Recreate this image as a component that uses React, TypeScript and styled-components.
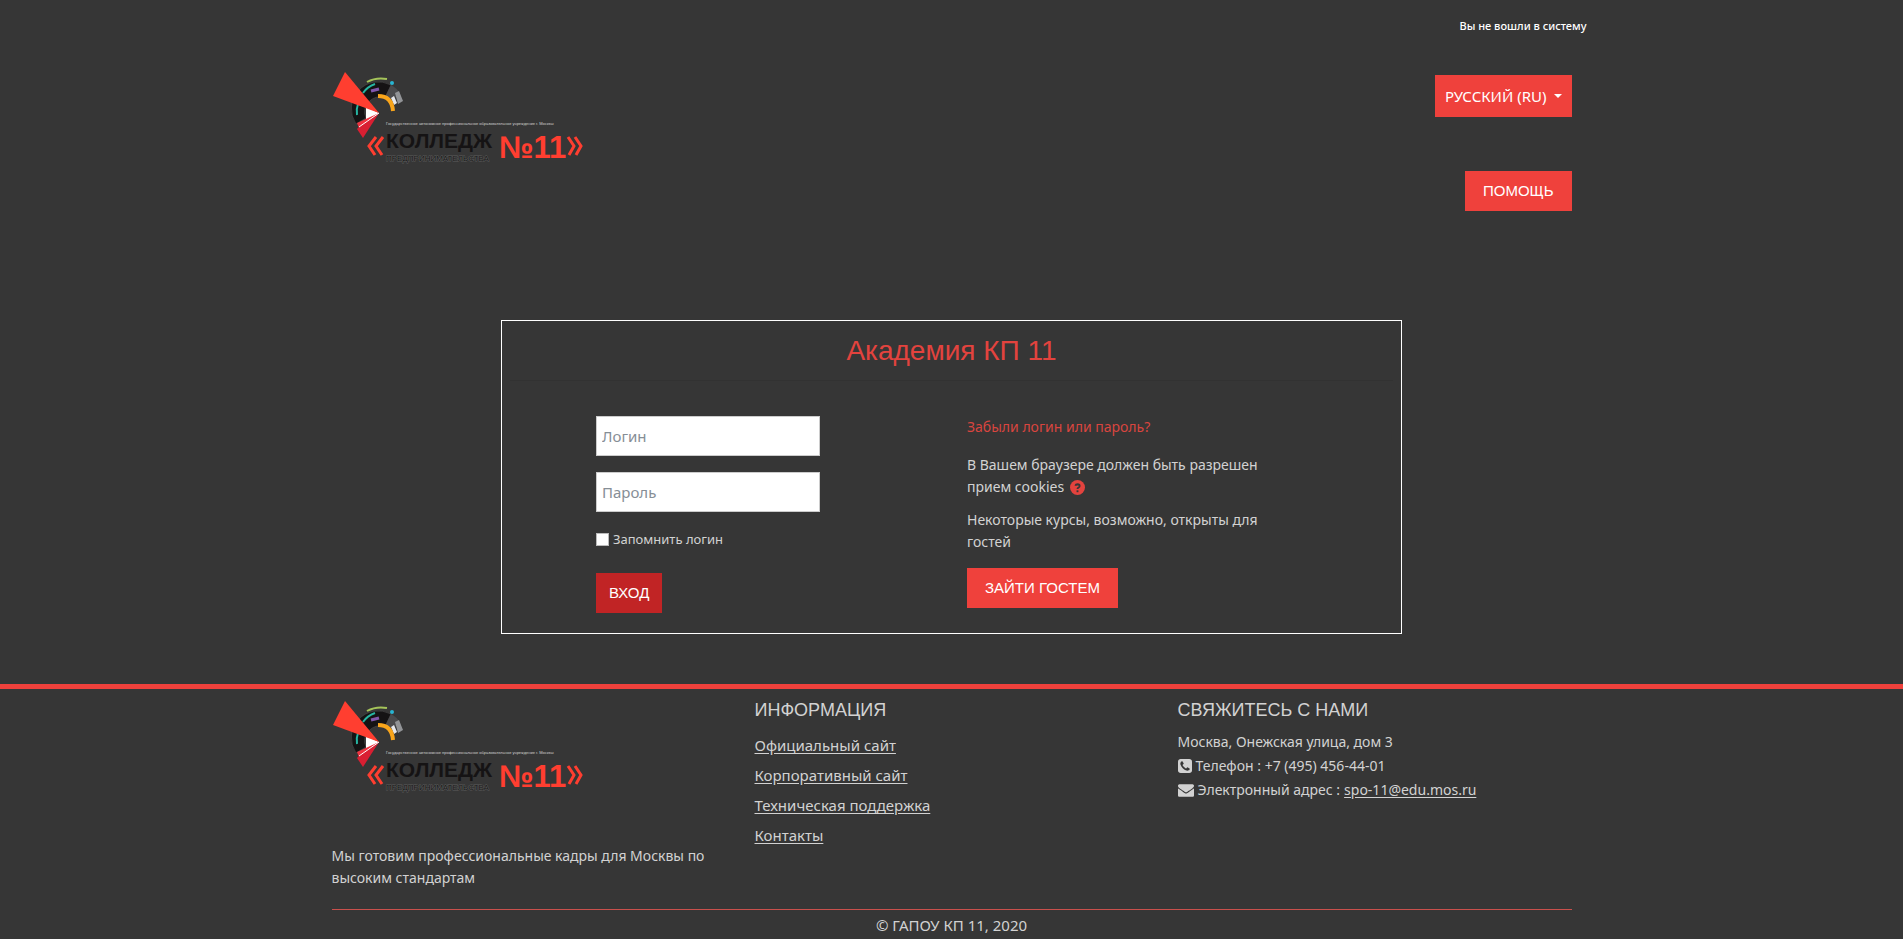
import React from "react";
import styled, { createGlobalStyle } from "styled-components";

const colors = {
  page: "#363636",
  text: "#d2d2d2",
  accent: "#ef413c",
  heading: "#e3433e",
  submit: "#c12425",
};

const GlobalStyle = createGlobalStyle`
  *, *::before, *::after { box-sizing: border-box; }
  body {
    margin: 0;
    background: ${colors.page};
    color: ${colors.text};
    font: 14px/22px "Noto Sans", "Open Sans", sans-serif;
  }
  p, h1, h2, ul { margin: 0; padding: 0; font-weight: 400; }
  ul { list-style: none; }
`;

const Page = styled.div`
  min-height: 100vh;
  display: flex;
  flex-direction: column;
`;

const Container = styled.div`
  width: 100%;
  max-width: 1240px;
  margin: 0 auto;
`;

const TopBar = styled.div`
  width: 100%;
  max-width: 1270px;
  height: 51px;
  margin: 0 auto;
  display: flex;
  align-items: center;
  justify-content: flex-end;
  color: #fff;
  font-size: 11px;
  font-weight: 500;
`;

const Header = styled(Container)`
  display: flex;
  align-items: flex-start;
  justify-content: space-between;
  padding-top: 16px;
`;

const HeaderActions = styled.div`
  display: flex;
  flex-direction: column;
  align-items: flex-end;
  gap: 54px;
  padding-top: 8px;
`;

const Button = styled.button<{ $submit?: boolean }>`
  height: 40px;
  padding: 0 ${(p) => (p.$submit ? 13 : 18)}px;
  border: 0;
  background: ${(p) => (p.$submit ? colors.submit : colors.accent)};
  color: #fff;
  font: 15px/22px "Liberation Sans", Arial, sans-serif;
  text-transform: uppercase;
  cursor: pointer;
`;

const LanguageButton = styled(Button)`
  height: 42px;
  padding: 0 10px;
  display: flex;
  align-items: center;
  gap: 7px;
  font-family: "Noto Sans", sans-serif;
`;

const Caret = styled.span`
  border: 4px solid transparent;
  border-top-color: #fff;
  border-bottom: 0;
`;

const LoginCard = styled.main`
  width: calc(100% - 32px);
  max-width: 901px;
  margin: 109px auto 50px;
  padding: 8px 8px 20px;
  border: 1px solid #fff;
`;

const CardTitle = styled.h1`
  padding: 4px 0 11px;
  border-bottom: 1px solid #323232;
  color: ${colors.heading};
  font: 28px/36px "Liberation Sans", Arial, sans-serif;
  text-align: center;
`;

const LoginColumns = styled.div`
  display: grid;
  grid-template-columns: 224px 300px;
  column-gap: 147px;
  padding: 35px 0 0 86px;
`;

const LoginForm = styled.form`
  display: flex;
  flex-direction: column;
  align-items: flex-start;
`;

const Field = styled.input`
  width: 100%;
  height: 40px;
  margin-bottom: 16px;
  padding: 0 5px;
  border: 1px solid #ccc;
  background: #fff;
  color: #444;
  font: 15px/22px "Noto Sans", sans-serif;
  &::placeholder { color: #868e96; opacity: 1; }
`;

const Remember = styled.label`
  display: flex;
  align-items: center;
  gap: 4px;
  margin-bottom: 23px;
  font-size: 13px;
`;

const Checkbox = styled.input`
  appearance: none;
  width: 13px;
  height: 13px;
  margin: 0;
  border: 1px solid #bbb;
  background: #fff;
  &:checked { background: ${colors.accent}; }
`;

const LoginHelp = styled.div`
  display: flex;
  flex-direction: column;
  align-items: flex-start;
  gap: 11px;

  ${Button} { margin-top: 4px; }
`;

const ForgotLink = styled.a`
  margin-bottom: 5px;
  color: #d9453f;
  text-decoration: none;
`;

const HelpIcon = styled.svg`
  width: 15px;
  height: 15px;
  margin-left: 6px;
  vertical-align: -3px;
`;

const Footer = styled.footer`
  border-top: 5px solid ${colors.accent};
`;

const FooterColumns = styled(Container)`
  display: grid;
  grid-template-columns: 393px 393px 1fr;
  column-gap: 30px;
  padding: 7px 0 20px;
`;

const About = styled.div`
  display: flex;
  flex-direction: column;
  gap: 49px;
`;

const FooterTitle = styled.h2`
  margin-bottom: 6px;
  font: 18px/28px "Liberation Sans", Arial, sans-serif;
  text-transform: uppercase;
`;

const LinkList = styled.ul`
  font-size: 15px;
  line-height: 30px;
`;

const TextLink = styled.a`
  color: inherit;
  text-underline-offset: 2px;
`;

const ContactLine = styled.p`
  display: flex;
  align-items: center;
  gap: 4px;
  line-height: 24px;
`;

const Copyright = styled(Container)`
  padding: 4px 0 5px;
  border-top: 1px solid #c9504c;
  font-size: 15px;
  text-align: center;
`;

const LogoLink = styled.a`
  display: block;
  height: 100px;
`;

const LogoText = styled.text`
  font-family: "Liberation Sans", Arial, sans-serif;
`;

function Logo() {
  return (
    <LogoLink href="#" aria-label="Колледж предпринимательства №11">
      <svg width="260" height="100" viewBox="0 0 260 100">
        <path d="M24 57 A27 27 0 0 1 59 18 L53 31 A15 15 0 0 0 34 51 Z" fill="#151314" stroke="#555" strokeWidth="0.5" />
        <path d="M59 18 Q65 21 68 27 L60 33 L53 30 Z" fill="#4b4b4d" />
        <path d="M63 26 L67 24 L71 34 L66 37 Z" fill="#929497" />
        <path d="M59 31 L62 29 L65 36 L62 38 Z" fill="#e5e7ec" />
        <path d="M35 15 Q44 10 55 12" fill="none" stroke="#a5c45a" strokeWidth="2" />
        <path d="M31 26 Q35 20 43 17 M25 48 Q24 42 26 37" fill="none" stroke="#27b5a2" strokeWidth="2" />
        <path d="M39 24 L47 22" stroke="#8257ad" strokeWidth="3" />
        <circle cx="60" cy="16" r="2" fill="#28b5d2" />
        <path d="M46 29 Q60 29 61 44" fill="none" stroke="#f9a51b" strokeWidth="4" />
        <path d="M47 46 L34 40 L34 54 Z" fill="#fff" />
        <path d="M47 46 L25 56 L27 61 Z" fill="#ef3340" />
        <path d="M47 46 L27 60 L25 62 L31 71 Z" fill="#d91f32" />
        <path d="M47 46 L27 60" stroke="#fff" strokeWidth="1" />
        <path d="M47 46 L13 5 L1 29 Z" fill="#ff3e30" />
        <LogoText x="54" y="58" fontSize="4" fill="#d0d0d0">
          Государственное автономное профессиональное образовательное учреждение г. Москвы
        </LogoText>
        <LogoText x="54" y="81" fontSize="21" fontWeight="700" fill="#151314">КОЛЛЕДЖ</LogoText>
        <LogoText x="54" y="94" fontSize="8" fill="#161616" stroke="#5c5c5c" strokeWidth="1" paintOrder="stroke">
          ПРЕДПРИНИМАТЕЛЬСТВА
        </LogoText>
        <LogoText x="167" y="91" fontSize="31" fontWeight="700" fill="#ff3e30">№11</LogoText>
        <path
          d="M44 70 L37 79 L43 88 M51 70 L44 79 L50 88 M236 70 L242 79 L237 88 M243 70 L249 79 L244 88"
          fill="none"
          stroke="#ff3e30"
          strokeWidth="3"
        />
      </svg>
    </LogoLink>
  );
}

function QuestionIcon() {
  return (
    <HelpIcon viewBox="0 0 16 16" role="img" aria-label="Справка">
      <circle cx="8" cy="8" r="8" fill={colors.heading} />
      <path d="M5.7 6.2 Q6.2 4.5 8 4.5 Q10.3 4.6 10.3 6.3 Q10.3 7.3 9.1 8 Q8 8.6 8 9.7" fill="none" stroke="#363636" strokeWidth="2" />
      <path d="M7 11h2v2H7z" fill="#363636" />
    </HelpIcon>
  );
}

function PhoneIcon() {
  return (
    <svg width="14" height="14" viewBox="0 128 1536 1536" fill="#d2d2d2" aria-hidden="true">
      <path
        fillRule="evenodd"
        d="M1280 1193q0-11-2-16t-18-16.5-40.5-25-47.5-26.5-45.5-25-28.5-15q-5-3-19-13t-25-15-21-5q-15 0-36.5 20.5t-39.5 45-38.5 45-33.5 20.5q-7 0-16.5-3.5t-15.5-6.5-17-9.5-14-8.5q-99-55-170-126.5t-127-170.5q-2-3-8.5-14t-9.5-17-6.5-15.5-3.5-16.5q0-13 20.5-33.5t45-38.5 45-39.5 20.5-36.5q0-10-5-21t-15-25-13-19q-3-6-15-28.5t-25-45.5-26.5-47.5-25-40.5-16.5-18-16-2q-48 0-101 22-46 21-80 94.5t-34 130.5q0 16 2.5 34t5 30.5 9 33 10 29.5 12.5 33 11 30q60 164 216.5 320.5t320.5 216.5q6 2 30 11t33 12.5 29.5 10 33 9 30.5 5 34 2.5q57 0 130.5-34t94.5-80q22-53 22-101zM1536 416v960q0 119-84.5 203.5T1248 1664H288q-119 0-203.5-84.5T0 1376V416q0-119 84.5-203.5T288 128h960q119 0 203.5 84.5T1536 416z"
      />
    </svg>
  );
}

function MailIcon() {
  return (
    <svg width="16" height="16" viewBox="0 0 1792 1792" fill="#d2d2d2" aria-hidden="true">
      <path d="M1792 710v794q0 66-47 113t-113 47H160q-66 0-113-47T0 1504V710q44 49 101 87 362 246 497 345 57 42 92.5 65.5t94.5 48 110 24.5h2q51 0 110-24.5t94.5-48T1194 1142q170-123 498-345 57-39 100-87zm0-294q0 79-49 151t-122 123q-376 261-468 325-10 7-42.5 31t-54 38.5-52 32.5-57.5 27-50 9h-2q-23 0-50-9t-57.5-27-52-32.5-54-38.5-42.5-31q-91-64-262-182.5T172 690q-62-42-117-115.5T0 438q0-78 41.5-130T160 256h1472q65 0 112.5 47t47.5 113z" />
    </svg>
  );
}

const infoLinks = ["Официальный сайт", "Корпоративный сайт", "Техническая поддержка", "Контакты"];

export default function App() {
  return (
    <Page>
      <GlobalStyle />
      <TopBar>Вы не вошли в систему</TopBar>
      <Header as="header">
        <Logo />
        <HeaderActions>
          <LanguageButton type="button">
            Русский (ru)
            <Caret />
          </LanguageButton>
          <Button type="button">Помощь</Button>
        </HeaderActions>
      </Header>

      <LoginCard>
        <CardTitle>Академия КП 11</CardTitle>
        <LoginColumns>
          <LoginForm onSubmit={(e) => e.preventDefault()}>
            <Field type="text" placeholder="Логин" aria-label="Логин" />
            <Field type="password" placeholder="Пароль" aria-label="Пароль" />
            <Remember>
              <Checkbox type="checkbox" />
              Запомнить логин
            </Remember>
            <Button type="submit" $submit>Вход</Button>
          </LoginForm>
          <LoginHelp>
            <ForgotLink href="#">Забыли логин или пароль?</ForgotLink>
            <p>
              В Вашем браузере должен быть разрешен прием cookies
              <QuestionIcon />
            </p>
            <p>Некоторые курсы, возможно, открыты для гостей</p>
            <Button type="button">Зайти гостем</Button>
          </LoginHelp>
        </LoginColumns>
      </LoginCard>

      <Footer>
        <FooterColumns>
          <About>
            <Logo />
            <p>Мы готовим профессиональные кадры для Москвы по высоким стандартам</p>
          </About>
          <section>
            <FooterTitle>Информация</FooterTitle>
            <LinkList>
              {infoLinks.map((label) => (
                <li key={label}>
                  <TextLink href="#">{label}</TextLink>
                </li>
              ))}
            </LinkList>
          </section>
          <section>
            <FooterTitle>Свяжитесь с нами</FooterTitle>
            <ContactLine>Москва, Онежская улица, дом 3</ContactLine>
            <ContactLine>
              <PhoneIcon />
              Телефон : +7 (495) 456-44-01
            </ContactLine>
            <ContactLine>
              <MailIcon />
              Электронный адрес : <TextLink href="mailto:spo-11@edu.mos.ru">spo-11@edu.mos.ru</TextLink>
            </ContactLine>
          </section>
        </FooterColumns>
        <Copyright>© ГАПОУ КП 11, 2020</Copyright>
      </Footer>
    </Page>
  );
}
